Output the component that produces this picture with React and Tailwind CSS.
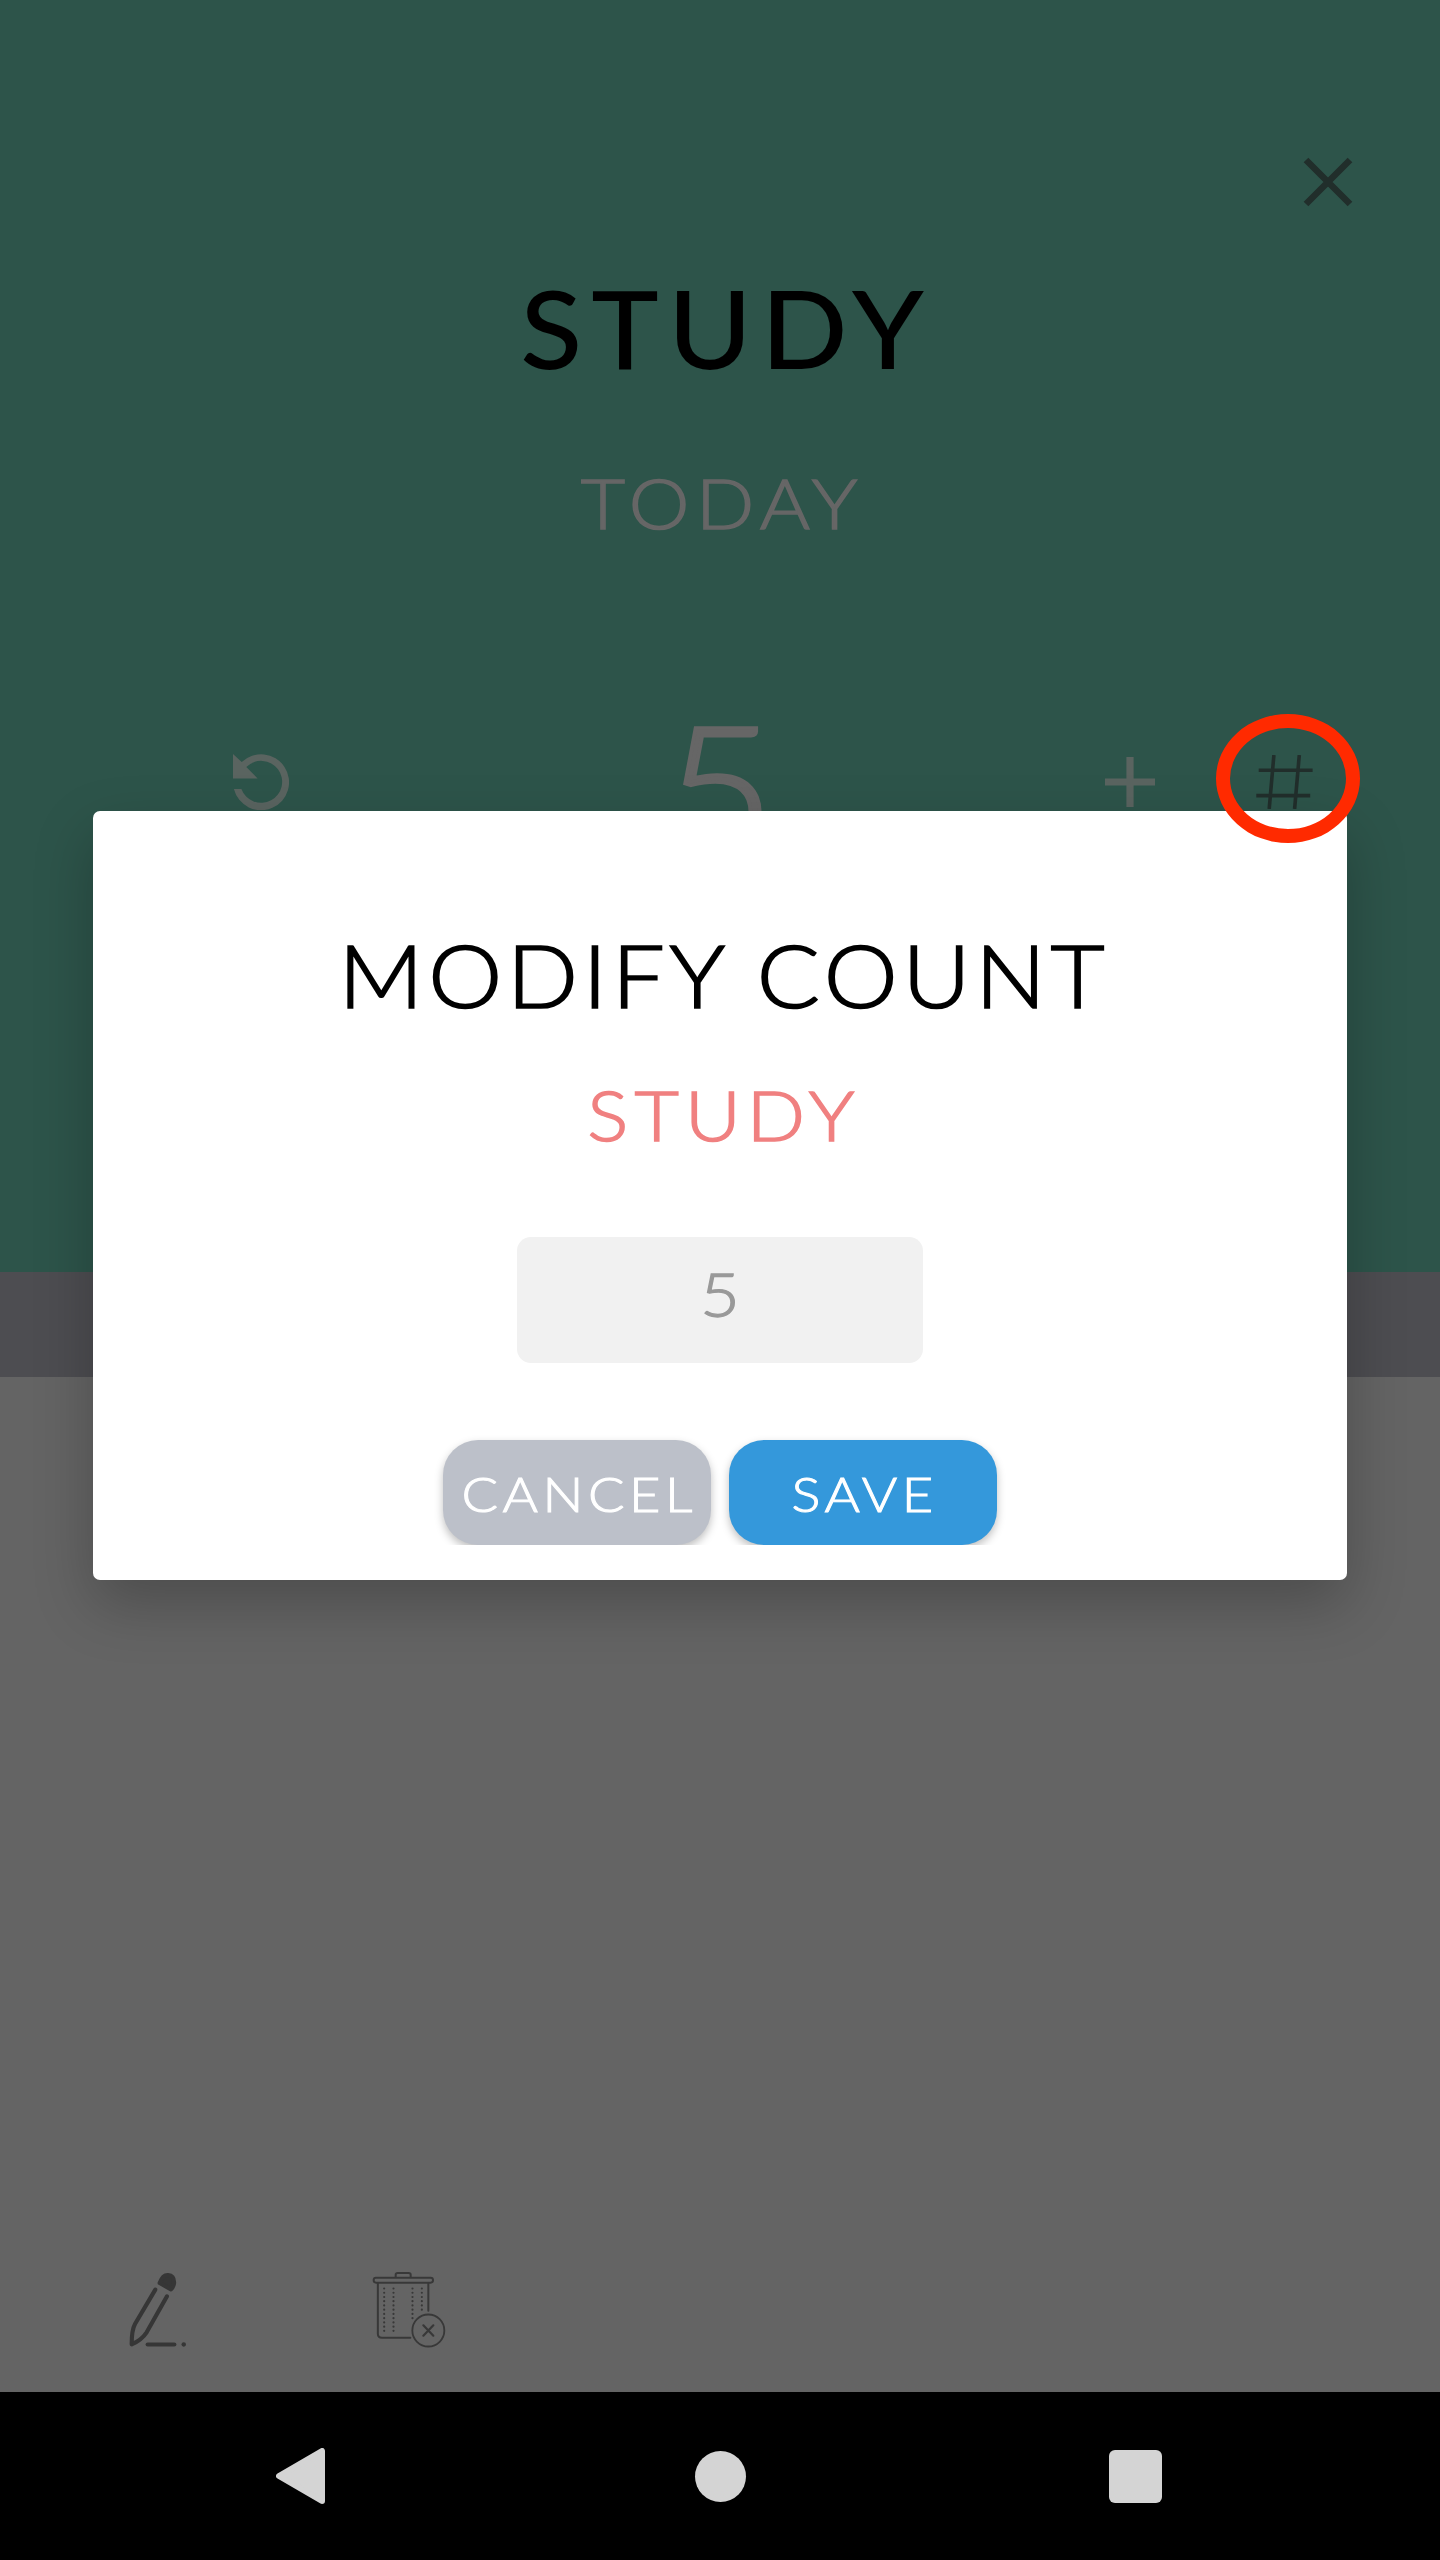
const INK = "#212e2b";

function CloseIcon() {
  return (
    <svg className="block h-[50px] w-[50px]" viewBox="0 0 50 50" fill="none" stroke={INK} strokeWidth="6.6">
      <path d="M3 3 L47 47 M47 3 L3 47" />
    </svg>
  );
}

function ResetIcon() {
  return (
    <svg className="mt-[57px] block h-[56px] w-[56px] shrink-0" viewBox="233 754 56 56" fill="#5a6460">
      <path d="M233 754 L241.7 762 A28 28 0 1 1 233.9 789 H241.4 A21 21 0 1 0 246.3 767 L257.6 778.5 H233 Z" />
    </svg>
  );
}

function PlusIcon() {
  return (
    <svg className="mt-[60px] ml-[185px] block h-[50px] w-[50px] shrink-0" viewBox="0 0 50 50" stroke="#5a6460" strokeWidth="7.2">
      <path d="M25 0 V50 M0 25 H50" />
    </svg>
  );
}

function HashIcon() {
  return (
    <svg className="mt-[58px] ml-[101px] block h-[54px] w-[57px] shrink-0" viewBox="1256 755 57 54" fill="none" stroke={INK} strokeWidth="3.6">
      <path d="M1258.7 770.2 H1312.6 M1256.3 795.6 H1310.2 M1273.9 755 L1269.2 809 M1299.3 755 L1294.6 809" />
    </svg>
  );
}

function PencilIcon() {
  return (
    <svg className="block h-[76px] w-[60px]" viewBox="85 96 180 228" fill="none" stroke="#363636" strokeWidth="12.5" strokeLinecap="round" strokeLinejoin="round">
      <path d="M167 149 L106 252 Q96 270 96 313 Q126 300 141 277 L202 169" />
      <path d="M144 313.500 H224" />
      <path d="M252 313.500 h0.500" strokeWidth="13" />
      <path d="M180 129 Q189 104 205 105 Q225 107 223 131 Q221 141 214 148 Z" fill="#363636" />
    </svg>
  );
}

function TrashIcon() {
  return (
    <svg className="ml-[184px] block h-[76px] w-[74px]" viewBox="816 95 222 228" fill="none" stroke="#383838" strokeWidth="6" strokeLinecap="round">
      <path d="M887 110 V103 Q887 98 893 98 H926 Q932 98 932 103 V110" />
      <rect x="821" y="112" width="178" height="15" rx="7" />
      <path d="M833.500 128 V280 Q833.500 292 846 292 H931 M985 128 V211" />
      <circle cx="985" cy="270.500" r="48" strokeWidth="5.5" />
      <path d="M970 255 L1000 286 M1000 255 L970 286" strokeWidth="6.5" />
      <path d="M852.500 144.500 V272 M880.500 144.500 V272 M937.500 144.500 V234 M965.500 144.500 V210" strokeWidth="6.500" strokeDasharray="0.100 12.600" />
    </svg>
  );
}

export default function App() {
  return (
    <div className="relative flex h-[2560px] w-[1440px] flex-col overflow-hidden bg-[#646464] font-['Lato',sans-serif] leading-none">
      <header className="flex h-[1272px] flex-col bg-[#2d544a] pt-[157px]">
        <div className="flex justify-end pr-[87px]">
          <CloseIcon />
        </div>
        <h1 className="mt-[67px] pl-[13px] text-center text-[107.5px] leading-none font-medium tracking-[8.5px] text-black">
          <span className="inline-block scale-x-[1.06]">STUDY</span>
        </h1>
        <p className="mt-[87px] pl-[4px] text-center text-[68.4px] leading-none font-light tracking-[6px] text-[#666666] [-webkit-text-stroke:1.5px_#666666]">
          <span className="inline-block scale-x-[1.12]">TODAY</span>
        </p>
        <div className="mt-[160px] flex h-[176px] pl-[233px]">
          <ResetIcon />
          <div className="ml-[231px] w-[400px] scale-x-[1.08] text-center text-[176px] leading-none font-light text-[#666666] [-webkit-text-stroke:3.5px_#666666]">5</div>
          <PlusIcon />
          <HashIcon />
        </div>
      </header>
      <div className="h-[105px] bg-[#4d4d51]" />
      <main className="flex flex-1 items-end pb-[44px] pl-[128px]">
        <PencilIcon />
        <TrashIcon />
      </main>
      <nav className="flex h-[168px] items-center bg-black pl-[276px]">
        <svg className="block h-[56px] w-[49px]" viewBox="0 0 49 56" fill="#d4d4d4" stroke="#d4d4d4" strokeWidth="6" strokeLinejoin="round">
          <path d="M3 28 L46 3 V53 Z" />
        </svg>
        <div className="ml-[369.5px] h-[51px] w-[51px] rounded-full bg-[#d4d4d4]" />
        <div className="ml-[363px] h-[53px] w-[53px] rounded-[6px] bg-[#d4d4d4]" />
      </nav>

      <section className="absolute top-[811px] left-[93px] flex h-[769px] w-[1254px] flex-col items-center rounded-[7px] bg-white shadow-[0_24px_60px_rgba(0,0,0,0.24)]">
        <h2 className="mt-[121px] ml-[7px] scale-x-[1.08] text-[86.5px] leading-none font-light tracking-[4.5px] whitespace-nowrap text-black [-webkit-text-stroke:1.7px_#000000]">MODIFY COUNT</h2>
        <p className="mt-[62px] ml-[8px] scale-x-[1.12] text-[68.4px] leading-none font-light tracking-[5.5px] text-[#f08080] [-webkit-text-stroke:1.5px_#f08080]">STUDY</p>
        <div className="mt-[88px] flex h-[126px] w-[406px] justify-center rounded-[14px] bg-[#f1f1f1] pt-[25px] text-[62px] leading-none font-light text-[#999999] [-webkit-text-stroke:1.3px_#999999]">
          <span className="inline-block scale-x-[1.1]">5</span>
        </div>
        <div className="mt-[67px] flex h-[115px] w-[574px] justify-center gap-[18px] overflow-hidden pt-[10px]">
          <button className="h-[105px] w-[268px] rounded-[35px] bg-[#bcc0c9] pt-[4px] pl-[5px] text-[47.9px] leading-none font-light tracking-[4px] text-white shadow-[0_4px_8px_rgba(0,0,0,0.25)] [-webkit-text-stroke:1px_#ffffff]">
            <span className="inline-block scale-x-[1.13]">CANCEL</span>
          </button>
          <button className="h-[105px] w-[268px] rounded-[35px] bg-[#3498db] pt-[4px] pl-[3px] text-[47.9px] leading-none font-light tracking-[4px] text-white shadow-[0_4px_8px_rgba(0,0,0,0.25)] [-webkit-text-stroke:1px_#ffffff]">
            <span className="inline-block scale-x-[1.13]">SAVE</span>
          </button>
        </div>
      </section>

      <div className="absolute top-[714px] left-[1216px] h-[129px] w-[144px] rounded-[50%] border-[14px] border-[#ff2a00]" />
    </div>
  );
}
